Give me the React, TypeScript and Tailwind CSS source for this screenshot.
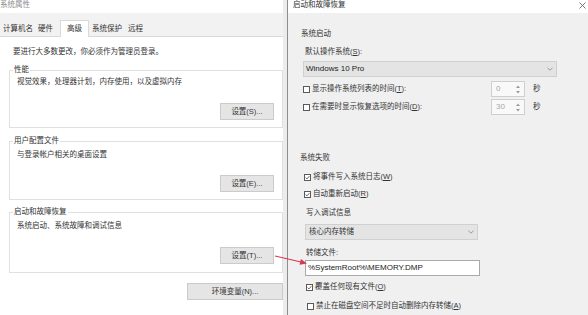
import React from "react";

const F = "font-['Liberation_Sans','Noto_Sans_CJK_SC',sans-serif]";

function Check({ checked }: { checked?: boolean }) {
  return (
    <span className="inline-flex w-[7px] h-[7px] border border-[#5a5a5a] bg-white items-center justify-center shrink-0">
      {checked && (
        <svg width="5" height="5" viewBox="0 0 5 5">
          <path d="M0.6 2.6 L2 3.9 L4.4 1.1" fill="none" stroke="#444" strokeWidth="0.8" />
        </svg>
      )}
    </span>
  );
}

function U({ c }: { c: string }) {
  return <span className="underline underline-offset-[1px]">{c}</span>;
}

function Btn({ children, className = "" }: { children: React.ReactNode; className?: string }) {
  return (
    <div
      className={`h-[17px] bg-[#e5e5e5] border border-[#cbcbcb] flex items-center justify-center text-[7.5px] leading-[10px] text-[#333] ${className}`}
    >
      {children}
    </div>
  );
}

function Chevron() {
  return (
    <svg width="6" height="4" viewBox="0 0 6 4">
      <path d="M0.5 0.8 L3 3.2 L5.5 0.8" fill="none" stroke="#888" strokeWidth="0.8" />
    </svg>
  );
}

function Spinner({ value }: { value: string }) {
  return (
    <div className="w-[34px] h-[16px] border border-[#cfcfcf] bg-[#f9f9f9] flex items-center">
      <span className="flex-1 pl-[4px] text-[8px] leading-[10px] text-[#a8a8a8]">{value}</span>
      <div className="w-[9px] h-full flex flex-col items-center justify-center gap-[3px] mr-[2px]">
        <svg width="4" height="3" viewBox="0 0 4 3">
          <path d="M0 3 L2 0.5 L4 3 Z" fill="#9a9a9a" />
        </svg>
        <svg width="4" height="3" viewBox="0 0 4 3">
          <path d="M0 0 L2 2.5 L4 0 Z" fill="#9a9a9a" />
        </svg>
      </div>
    </div>
  );
}

function Group({
  label,
  text,
  button,
  className = "",
  textMt,
  btnMt,
  pb,
}: {
  label: string;
  text: string;
  button: React.ReactNode;
  className?: string;
  textMt: string;
  btnMt: string;
  pb: string;
}) {
  return (
    <fieldset className={`w-[274px] border border-[#e0e0e0] ${pb} ${className}`}>
      <legend className="ml-[3px] px-[1px] text-[7.5px] leading-[10px] text-[#333]">{label}</legend>
      <div className={`pl-[7px] h-[10px] leading-[10px] text-[7.5px] text-[#333] ${textMt}`}>{text}</div>
      <div className={`flex justify-end pr-[8px] ${btnMt}`}>{button}</div>
    </fieldset>
  );
}

export default function App() {
  return (
    <div className={`relative w-[588px] h-[315px] overflow-hidden flex bg-white ${F}`}>
      {/* Left window: 系统属性 */}
      <div className="w-[283px] h-full flex flex-col bg-white">
        <div className="h-[13px] bg-white text-[#8a8a8a] text-[7.5px] leading-[10px]">系统属性</div>
        <div className="h-[24px] bg-[#f2f2f2] flex items-end border-b border-[#d9d9d9] text-[7.5px] leading-[10px] text-[#333]">
          <div className="ml-[3px] h-[14px] flex items-center">计算机名</div>
          <div className="ml-[5px] h-[14px] flex items-center">硬件</div>
          <div className="ml-[7px] px-[6px] h-[17px] -mb-px bg-white border border-b-0 border-[#d9d9d9] flex items-center">高级</div>
          <div className="ml-[3px] h-[14px] flex items-center">系统保护</div>
          <div className="ml-[6px] h-[14px] flex items-center">远程</div>
        </div>
        <div className="flex-1 flex flex-col pl-[9px]">
          <div className="mt-[10px] pl-[4px] h-[10px] leading-[10px] text-[7.5px] text-[#333]">
            要进行大多数更改，你必须作为管理员登录。
          </div>
          <Group
            className="mt-[8px]"
            label="性能"
            text="视觉效果，处理器计划，内存使用，以及虚拟内存"
            textMt="mt-[2px]"
            btnMt="mt-[16px]"
            pb="pb-[7px]"
            button={<Btn className="w-[54px]">设置(S)...</Btn>}
          />
          <Group
            className="mt-[8px]"
            label="用户配置文件"
            text="与登录帐户相关的桌面设置"
            textMt="mt-[4px]"
            btnMt="mt-[15px]"
            pb="pb-[7px]"
            button={<Btn className="w-[54px]">设置(E)...</Btn>}
          />
          <Group
            className="mt-[7px]"
            label="启动和故障恢复"
            text="系统启动、系统故障和调试信息"
            textMt="mt-[4px]"
            btnMt="mt-[16px]"
            pb="pb-[8px]"
            button={<Btn className="w-[54px]">设置(T)...</Btn>}
          />
          <div className="flex justify-end mt-[10px]">
            <Btn className="w-[96px]">环境变量(N)...</Btn>
          </div>
        </div>
      </div>
      <div className="w-[4px] h-full bg-[#ececec]" />

      {/* Right window: 启动和故障恢复 */}
      <div className="flex-1 h-full flex flex-col border-l border-[#8c8c8c]">
        <div className="h-[13px] bg-white flex items-start justify-between pl-[5px] pr-[2px]">
          <span className="text-[7.5px] leading-[10px] text-[#333]">启动和故障恢复</span>
          <svg width="7" height="7" viewBox="0 0 7 7" className="mt-[2px]">
            <path d="M0.5 0.5 L6.5 6.5 M6.5 0.5 L0.5 6.5" stroke="#555" strokeWidth="0.8" />
          </svg>
        </div>
        <div className="flex-1 bg-[#f0f0f0] pl-[13px] flex flex-col text-[7.5px] leading-[10px] text-[#333]">
          <div className="mt-[15px] h-[12px] flex items-center">系统启动</div>
          <div className="mt-[6px] h-[12px] flex items-center pl-[4px]">
            默认操作系统(<U c="S" />):
          </div>
          <div className="mt-[3px] ml-[2px] w-[254px] h-[16px] bg-[#e4e4e4] border border-[#d0d0d0] flex items-center justify-between pl-[2px] pr-[3px]">
            <span className="text-[8px] text-[#222]">Windows 10 Pro</span>
            <Chevron />
          </div>
          <div className="mt-[4px] ml-[2px] h-[16px] flex items-center">
            <div className="w-[188px] flex items-center gap-[2px]">
              <Check />
              <span>
                显示操作系统列表的时间(<U c="T" />):
              </span>
            </div>
            <Spinner value="0" />
            <span className="ml-[8px]">秒</span>
          </div>
          <div className="mt-[2px] ml-[2px] h-[16px] flex items-center">
            <div className="w-[188px] flex items-center gap-[2px]">
              <Check />
              <span>
                在需要时显示恢复选项的时间(<U c="D" />):
              </span>
            </div>
            <Spinner value="30" />
            <span className="ml-[8px]">秒</span>
          </div>

          <div className="mt-[37px] -ml-[1px] h-[12px] flex items-center">系统失败</div>
          <div className="mt-[7px] ml-[3px] h-[12px] flex items-center gap-[2px]">
            <Check checked />
            <span>
              将事件写入系统日志(<U c="W" />)
            </span>
          </div>
          <div className="mt-[5px] ml-[3px] h-[12px] flex items-center gap-[2px]">
            <Check checked />
            <span>
              自动重新启动(<U c="R" />)
            </span>
          </div>
          <div className="mt-[7px] ml-[5px] h-[12px] flex items-center">写入调试信息</div>
          <div className="mt-[5px] ml-[4px] w-[173px] h-[16px] bg-[#e4e4e4] border border-[#d0d0d0] flex items-center justify-between pl-[3px] pr-[3px]">
            <span>核心内存转储</span>
            <Chevron />
          </div>
          <div className="mt-[7px] ml-[5px] h-[12px] flex items-center">转储文件:</div>
          <div className="mt-[1px] ml-[4px] w-[175px] h-[16px] bg-white border border-[#a9a9a9] flex items-center pl-[2px]">
            <span className="text-[8px] text-[#222]">%SystemRoot%\MEMORY.DMP</span>
          </div>
          <div className="mt-[5px] ml-[5px] h-[12px] flex items-center gap-[2px]">
            <Check checked />
            <span>
              覆盖任何现有文件(<U c="O" />)
            </span>
          </div>
          <div className="mt-[7px] ml-[6px] h-[12px] flex items-center gap-[2px]">
            <Check />
            <span>
              禁止在磁盘空间不足时自动删除内存转储(<U c="A" />)
            </span>
          </div>
        </div>
      </div>

      {/* Red annotation arrow */}
      <svg className="absolute left-0 top-0 pointer-events-none" width="588" height="315" viewBox="0 0 588 315">
        <line x1="275" y1="256" x2="301" y2="262" stroke="#d43a50" strokeWidth="1.1" />
        <polygon points="307,263.5 300.9,259 299.5,264.8" fill="#d43a50" />
      </svg>
    </div>
  );
}
